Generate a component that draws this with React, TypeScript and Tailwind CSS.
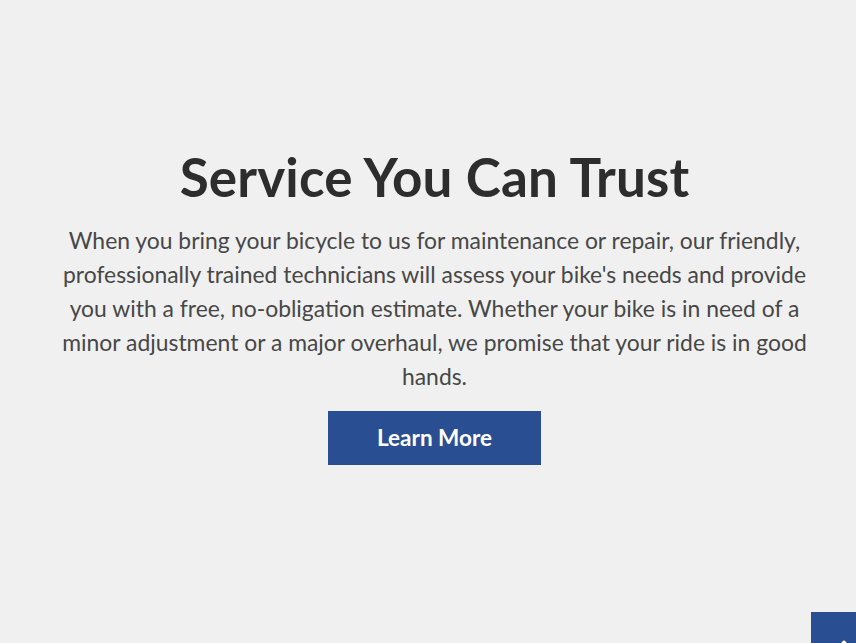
export default function App() {
  return (
    <div className="relative w-full h-[643px] overflow-hidden bg-[#f0f0f0] font-['Lato',sans-serif]">
      <div className="flex flex-col items-center pl-[13px] pt-[145px]">
        <h1 className="text-[53px] leading-[64px] font-bold text-[#2d2d2d] tracking-[0.15px]">Service You Can Trust</h1>
        <p className="mt-[14px] w-[760px] text-center text-[22.9px] leading-[34px] text-[#474747]">
          When you bring your bicycle to us for maintenance or repair, our friendly, professionally trained technicians will assess your bike's needs and provide you with a free, no-obligation estimate. Whether your bike is in need of a minor adjustment or a major overhaul, we promise that your ride is in good hands.
        </p>
        <button className="mt-[18px] w-[213px] h-[54px] bg-[#2a4e92] text-white text-[22.5px] font-bold">
          Learn More
        </button>
      </div>
      <div className="absolute left-[811px] top-[612px] w-[66px] h-[50px] bg-[#2a4e92]">
        <svg className="absolute left-[25px] top-[27px]" width="16" height="12" viewBox="0 0 16 12">
          <path d="M2 10 L8 3 L14 10" fill="none" stroke="white" strokeWidth="3" strokeLinecap="round" strokeLinejoin="round" />
        </svg>
      </div>
    </div>
  );
}
